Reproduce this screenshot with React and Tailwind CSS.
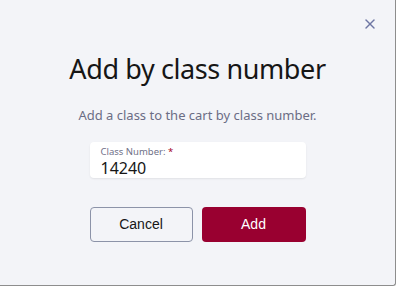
import { X } from 'lucide-react'

export default function App() {
  return (
    <div className="w-[397px] h-[287px] bg-white overflow-hidden">
      <div
        className="relative w-[396px] h-[286px] bg-[#f3f4f8] border-r border-b border-[#8d8d8d] rounded-br-[3px] flex flex-col items-center"
        style={{ fontFamily: '"Noto Sans", Inter, sans-serif' }}
      >
        {/* Close button */}
        <button className="absolute top-[16px] right-[17px] w-[16px] h-[16px] flex items-center justify-center text-[#6e76a3]">
          <X className="w-[16px] h-[16px]" strokeWidth={2.2} />
        </button>

        <h1 className="mt-[51px] text-[27px] leading-[36px] text-[#161616] tracking-[-0.4px]">Add by class number</h1>

        <p className="mt-[18px] text-[13px] leading-[20px] text-[#6b6d85]">Add a class to the cart by class number.</p>

        {/* Input */}
        <div className="mt-[17px] w-[216px] h-[36px] bg-white rounded-[4px] shadow-[0_1px_2px_rgba(0,0,0,0.08)] px-[11px] pt-[4px] flex flex-col">
          <label className="text-[9.5px] leading-[12px] text-[#6f7088]">
            Class Number: <span className="text-[#a3001e]">*</span>
          </label>
          <input
            className="text-[16px] leading-[20px] text-[#161616] outline-none bg-transparent w-full"
            defaultValue="14240"
          />
        </div>

        {/* Buttons */}
        <div className="mt-[29px] flex gap-[9px]" style={{ fontFamily: '"Liberation Sans", Arial, sans-serif' }}>
          <button className="w-[103px] h-[35px] rounded-[4px] border border-[#8c93a8] text-[14px] text-[#161616] bg-transparent">
            Cancel
          </button>
          <button className="w-[104px] h-[35px] rounded-[4px] bg-[#990030] text-[14px] text-white">
            Add
          </button>
        </div>
      </div>
    </div>
  )
}
